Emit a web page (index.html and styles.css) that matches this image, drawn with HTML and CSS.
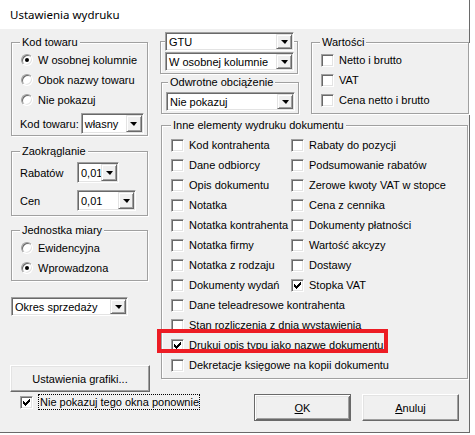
FILE: index.html
```html
<!DOCTYPE html>
<html lang="pl">
<head>
<meta charset="utf-8">
<title>Ustawienia wydruku</title>
<link rel="stylesheet" href="styles.css">
</head>
<body>
<div class="window">
  <div class="titlebar">Ustawienia wydruku</div>
  <div class="main">
    <div class="left">
      <fieldset class="group g-kod">
        <legend>Kod towaru</legend>
        <div class="row"><span class="radio on"></span><span>W osobnej kolumnie</span></div>
        <div class="row"><span class="radio"></span><span>Obok nazwy towaru</span></div>
        <div class="row"><span class="radio"></span><span>Nie pokazuj</span></div>
        <div class="frow frow-kod">
          <span class="flabel">Kod towaru:</span>
          <div class="combo w-kod"><span class="val">własny</span><span class="dd"><i class="tri"></i></span></div>
        </div>
      </fieldset>
      <fieldset class="group g-zaok">
        <legend>Zaokrąglanie</legend>
        <div class="frow frow-rab">
          <span class="flabel wl">Rabatów</span>
          <div class="combo w-rab"><span class="val">0,01</span><span class="dd"><i class="tri"></i></span></div>
        </div>
        <div class="frow frow-cen">
          <span class="flabel wl">Cen</span>
          <div class="combo w-cen"><span class="val">0,01</span><span class="dd"><i class="tri"></i></span></div>
        </div>
      </fieldset>
      <fieldset class="group g-jedn">
        <legend>Jednostka miary</legend>
        <div class="row"><span class="radio"></span><span>Ewidencyjna</span></div>
        <div class="row"><span class="radio on"></span><span>Wprowadzona</span></div>
      </fieldset>
      <div class="combo w-okres"><span class="val">Okres sprzedaży</span><span class="dd"><i class="tri"></i></span></div>
      <button class="btn btn-graf" type="button">Ustawienia grafiki...</button>
      <div class="row row-nie"><span class="cb on"></span><span class="focus">Nie pokazuj tego okna ponownie</span></div>
    </div>
    <div class="right">
      <div class="toprow">
        <div class="mid">
          <fieldset class="group g-gtu">
            <legend class="lg-combo"><div class="combo w-mid"><span class="val">GTU</span><span class="dd"><i class="tri"></i></span></div></legend>
            <div class="combo w-mid c-gtu2"><span class="val">W osobnej kolumnie</span><span class="dd"><i class="tri"></i></span></div>
          </fieldset>
          <fieldset class="group g-odw">
            <legend>Odwrotne obciążenie</legend>
            <div class="combo w-mid c-odw"><span class="val">Nie pokazuj</span><span class="dd"><i class="tri"></i></span></div>
          </fieldset>
        </div>
        <fieldset class="group g-wart">
          <legend>Wartości</legend>
          <div class="row"><span class="cb"></span><span>Netto i brutto</span></div>
          <div class="row"><span class="cb"></span><span>VAT</span></div>
          <div class="row"><span class="cb"></span><span>Cena netto i brutto</span></div>
        </fieldset>
      </div>
      <fieldset class="group g-inne">
        <legend>Inne elementy wydruku dokumentu</legend>
        <div class="grid">
          <div class="row"><span class="cb"></span><span>Kod kontrahenta</span></div>
          <div class="row"><span class="cb"></span><span>Rabaty do pozycji</span></div>
          <div class="row"><span class="cb"></span><span>Dane odbiorcy</span></div>
          <div class="row"><span class="cb"></span><span>Podsumowanie rabatów</span></div>
          <div class="row"><span class="cb"></span><span>Opis dokumentu</span></div>
          <div class="row"><span class="cb"></span><span>Zerowe kwoty VAT w stopce</span></div>
          <div class="row"><span class="cb"></span><span>Notatka</span></div>
          <div class="row"><span class="cb"></span><span>Cena z cennika</span></div>
          <div class="row"><span class="cb"></span><span>Notatka kontrahenta</span></div>
          <div class="row"><span class="cb"></span><span>Dokumenty płatności</span></div>
          <div class="row"><span class="cb"></span><span>Notatka firmy</span></div>
          <div class="row"><span class="cb"></span><span>Wartość akcyzy</span></div>
          <div class="row"><span class="cb"></span><span>Notatka z rodzaju</span></div>
          <div class="row"><span class="cb"></span><span>Dostawy</span></div>
          <div class="row"><span class="cb"></span><span>Dokumenty wydań</span></div>
          <div class="row"><span class="cb on"></span><span>Stopka VAT</span></div>
          <div class="row full"><span class="cb"></span><span>Dane teleadresowe kontrahenta</span></div>
          <div class="row full"><span class="cb"></span><span>Stan rozliczenia z dnia wystawienia</span></div>
          <div class="row full hl"><span class="cb on"></span><span>Drukuj opis typu jako nazwę dokumentu</span><span class="redbox"></span></div>
          <div class="row full"><span class="cb"></span><span>Dekretacje księgowe na kopii dokumentu</span></div>
        </div>
      </fieldset>
      <div class="buttons">
        <button class="btn btn-def" type="button"><u>O</u>K</button>
        <button class="btn" type="button"><u>A</u>nuluj</button>
      </div>
    </div>
  </div>
</div>
</body>
</html>
```
FILE: styles.css
```css
* { box-sizing: border-box; }
html, body { margin: 0; padding: 0; background: #fff; }
body {
  font-family: "Liberation Sans", Arial, sans-serif;
  font-size: 11px;
  color: #000;
}
.window {
  width: 470px;
  height: 433px;
  border-right: 1px solid #6a6a6a;
  border-bottom: 1px solid #6a6a6a;
  background: #f0f0f0;
  display: flex;
  flex-direction: column;
}
.titlebar {
  height: 29px;
  background: #fff;
  padding: 7px 0 0 10px;
  font-family: "Noto Sans", "Liberation Sans", sans-serif;
  font-size: 11.5px;
  line-height: 16px;
}
.main { display: flex; flex: 1; }
.left {
  width: 140px;
  margin-left: 10px;
  display: flex;
  flex-direction: column;
  align-items: flex-start;
}
.right {
  width: 309px;
  margin-left: 10px;
  display: flex;
  flex-direction: column;
}

/* group boxes */
.group {
  margin: 0;
  border: 1px solid #a0a0a0;
  box-shadow: 1px 1px 0 #fff, inset 1px 1px 0 #fff;
  padding: 0 2px 0 9px;
  min-width: 0;
}
.group legend {
  padding: 0 2px;
  margin-left: -1px;
  line-height: 13px;
  height: 13px;
  background: #f0f0f0;
}

.row {
  display: flex;
  align-items: center;
  height: 20px;
  white-space: nowrap;
  gap: 5px;
}

/* left column */
.g-kod { width: 137px; margin: 7px 0 0 1px; padding-top: 1px; padding-bottom: 1px; }
.frow { display: flex; align-items: center; white-space: nowrap; }
.frow-kod { margin: 3px 0 0 -1px; }
.flabel { margin-right: 2px; }
.wl { width: 55px; }
.g-zaok { width: 137px; margin: 9px 0 0 1px; padding-top: 4px; padding-bottom: 4px; }
.frow-rab { margin-left: -1px; }
.frow-cen { margin: 7px 0 0 -1px; }
.g-jedn { width: 137px; margin: 8px 0 0 1px; padding-top: 1px; padding-bottom: 2px; }

/* checkbox & radio */
.cb {
  flex: none;
  width: 13px;
  height: 13px;
  background: #fff;
  border: 1px solid;
  border-color: #a0a0a0 #fff #fff #a0a0a0;
  box-shadow: inset 1px 1px 0 #696969, inset -1px -1px 0 #e3e3e3;
  position: relative;
}
.cb.on::after {
  content: "";
  position: absolute;
  left: 2px;
  top: 2px;
  width: 7px;
  height: 7px;
  background: no-repeat center/7px 7px url("data:image/svg+xml,%3Csvg xmlns='http://www.w3.org/2000/svg' width='7' height='7' viewBox='0 0 7 7' shape-rendering='crispEdges'%3E%3Cpath d='M6 0h1v1h-1zM5 1h2v1h-2zM4 2h3v1h-3zM0 2h1v1h-1zM0 3h1v1h-1zM1 3h1v1h-1zM3 3h3v1h-3zM0 4h5v1h-5zM1 5h3v1h-3zM2 6h1v1h-1z' fill='%23000'/%3E%3C/svg%3E");
}
.radio {
  flex: none;
  width: 12px;
  height: 12px;
  border-radius: 50%;
  background: #fff;
  border: 1px solid;
  border-color: #a0a0a0 #fff #fff #a0a0a0;
  box-shadow: inset 1px 1px 0 #696969, inset -1px -1px 0 #e3e3e3;
  position: relative;
}
.radio.on::after {
  content: "";
  position: absolute;
  left: 3px;
  top: 3px;
  width: 4px;
  height: 4px;
  border-radius: 50%;
  background: #000;
}

/* combo */
.combo {
  display: flex;
  height: 21px;
  background: #fff;
  border: 1px solid;
  border-color: #a0a0a0 #fff #fff #a0a0a0;
  box-shadow: inset 1px 1px 0 #696969, inset -1px -1px 0 #e3e3e3;
  padding: 1px;
  flex: none;
}
.combo .val {
  flex: 1;
  padding-left: 2px;
  display: flex;
  align-items: center;
  white-space: nowrap;
  overflow: hidden;
}
.combo .dd {
  width: 16px;
  flex: none;
  background: #f0f0f0;
  border: 1px solid;
  border-color: #e3e3e3 #696969 #696969 #e3e3e3;
  box-shadow: inset 1px 1px 0 #fff, inset -1px -1px 0 #a0a0a0;
  display: flex;
  align-items: center;
  justify-content: center;
}
.tri {
  width: 0;
  height: 0;
  border-left: 4px solid transparent;
  border-right: 3px solid transparent;
  border-top: 4px solid #000;
  margin-top: 1px;
}
.w-kod { width: 63px; }
.w-rab { width: 42px; }
.w-cen { width: 59px; }
.w-okres { width: 117px; height: 19px; margin: 16px 0 0 1px; }
.w-mid { width: 129px; height: 19px; }

/* buttons */
.btn {
  font: inherit;
  color: #000;
  background: #f0f0f0;
  border: 1px solid;
  border-color: #fff #696969 #696969 #fff;
  box-shadow: inset -1px -1px 0 #a0a0a0, inset 1px 1px 0 #e3e3e3;
  padding: 0;
  margin: 0;
  height: 27px;
}
.btn-graf { width: 140px; margin-top: 49px; }
.row-nie { margin: 2px 0 0 10px; gap: 5px; height: 16px; }
.focus {
  border: 1px dotted #000;
  padding: 0 0 0 1px;
  line-height: 14px;
}

/* middle */
.toprow { display: flex; }
.mid { width: 138px; display: flex; flex-direction: column; }
.g-gtu { width: 138px; margin-top: 3px; padding: 0 2px 2px 4px; }
.g-gtu legend.lg-combo {
  padding: 0;
  margin: 0;
  height: 19px;
  line-height: normal;
  background: none;
}
.c-gtu2 { margin-top: 1px; }
.g-odw { width: 138px; margin: 2px 0 0 1px; padding: 3px 2px 2px 4px; }
.g-odw legend { margin-left: 2px; }
.g-wart { width: 158px; margin: 7px 0 0 13px; padding-top: 1px; padding-bottom: 3px; }

.g-inne { width: 307px; margin: 5px 0 0 1px; padding-top: 3px; padding-bottom: 3px; }
.g-inne legend { margin-left: 0; }
.grid { display: grid; grid-template-columns: 120px 1fr; }
.grid .full { grid-column: 1 / -1; }
.hl { position: relative; }
.redbox {
  position: absolute;
  left: -14px;
  top: -6px;
  width: 231px;
  height: 24px;
  border: 4px solid #ed1c24;
}

.buttons { display: flex; gap: 11px; margin: 15px 0 0 94px; }
.buttons .btn { width: 97px; }
.btn-def {
  border-color: #696969;
  box-shadow: inset 1px 1px 0 #fff, inset -1px -1px 0 #696969, inset 2px 2px 0 #e3e3e3, inset -2px -2px 0 #a0a0a0;
}
```
